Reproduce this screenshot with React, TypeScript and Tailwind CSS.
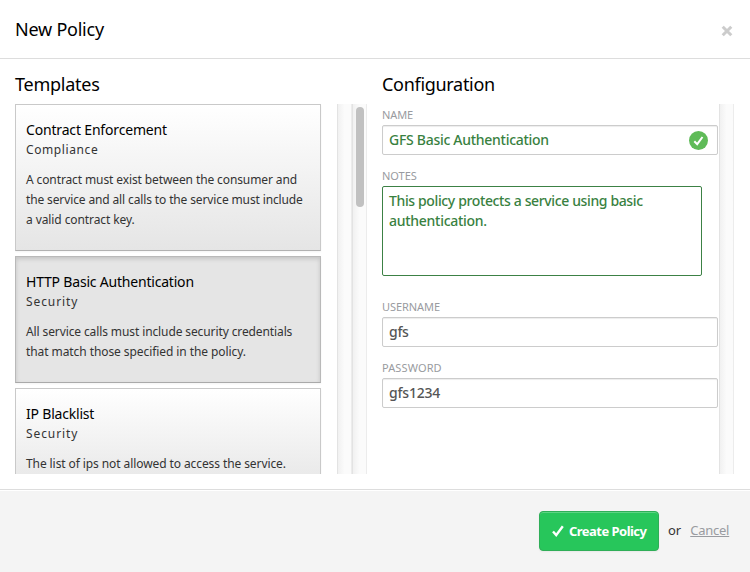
import type { ReactNode } from "react";

type Line = { text: string; tracking: string };

type Template = {
  title: string;
  titleTracking: string;
  kind: string;
  kindTracking: string;
  lines: Line[];
  selected?: boolean;
};

const templates: Template[] = [
  {
    title: "Contract Enforcement",
    titleTracking: "tracking-[-0.17px]",
    kind: "Compliance",
    kindTracking: "tracking-[0.6px]",
    lines: [
      { text: "A contract must exist between the consumer and", tracking: "tracking-[-0.11px]" },
      { text: "the service and all calls to the service must include", tracking: "tracking-[-0.13px]" },
      { text: "a valid contract key.", tracking: "tracking-[-0.09px]" },
    ],
  },
  {
    title: "HTTP Basic Authentication",
    titleTracking: "tracking-[-0.2px]",
    kind: "Security",
    kindTracking: "tracking-[0.9px]",
    selected: true,
    lines: [
      { text: "All service calls must include security credentials", tracking: "tracking-[-0.11px]" },
      { text: "that match those specified in the policy.", tracking: "tracking-[-0.08px]" },
    ],
  },
  {
    title: "IP Blacklist",
    titleTracking: "tracking-[-0.2px]",
    kind: "Security",
    kindTracking: "tracking-[0.9px]",
    lines: [{ text: "The list of ips not allowed to access the service.", tracking: "tracking-[-0.09px]" }],
  },
];

function TemplateCard({ template }: { template: Template }) {
  const surface = template.selected
    ? "bg-[#e5e5e5] border-[#b9b9b9] border-b-[#a9a9a9] shadow-[inset_0_2px_4px_rgba(0,0,0,0.15),0_1px_2px_rgba(0,0,0,0.05)]"
    : "bg-linear-to-b from-white to-[#e5e5e5] border-[#c9c9c9] border-b-[#b1b1b1] shadow-[0_1px_2px_rgba(0,0,0,0.05)]";
  return (
    <article className={`mb-[5px] shrink-0 border px-[10px] pt-[15px] pb-5 whitespace-nowrap ${surface}`}>
      <h3 className={`text-[14px] leading-5 text-black ${template.titleTracking}`}>{template.title}</h3>
      <p className={`text-[12px] leading-5 text-[#333] ${template.kindTracking}`}>{template.kind}</p>
      <div className="mt-[10px] text-[12px] leading-5 text-[#333]">
        {template.lines.map((line) => (
          <p key={line.text} className={line.tracking}>
            {line.text}
          </p>
        ))}
      </div>
    </article>
  );
}

function Track({ thumb = false }: { thumb?: boolean }) {
  return (
    <div className="w-[15px] shrink-0 border-x border-l-[#e3e3e3] border-r-[#ececec] bg-linear-to-r from-[#f1f1f1] via-[#fbfbfb] via-50% to-[#fbfbfb] pt-[3px] pl-[3px]">
      {thumb && <div className="h-[100px] w-2 rounded-full bg-[#c1c1c1]" />}
    </div>
  );
}

function Field({ label, tracking, children }: { label: string; tracking: string; children: ReactNode }) {
  return (
    <div className="flex flex-col items-start">
      <label className={`text-[11px] leading-5 text-[#999ba0] ${tracking}`}>{label}</label>
      {children}
    </div>
  );
}

const inputBox =
  "flex h-[30px] w-[336px] items-center rounded-[2px] border border-[#ccc] px-[6px] text-[14px] font-medium leading-5 whitespace-nowrap shadow-[inset_0_1px_1px_rgba(0,0,0,0.075)]";

export default function App() {
  return (
    <div className="flex h-[572px] w-[750px] flex-col overflow-hidden bg-white font-['Noto_Sans','Open_Sans',sans-serif] text-black">
      <header className="flex h-[59px] shrink-0 items-center justify-between border-b border-[#ddd] pr-[17px] pl-[15px]">
        <h1 className="text-[18px] leading-5 tracking-[-0.23px]">New Policy</h1>
        <button aria-label="Close" className="mt-[3px] text-[#ccc]">
          <svg width="12" height="12" viewBox="0 0 12 12" fill="none" stroke="currentColor" strokeWidth="3">
            <path d="M1.7 1.7l8.6 8.6M10.3 1.7l-8.6 8.6" />
          </svg>
        </button>
      </header>

      <main className="flex h-[430px] shrink-0">
        <section className="ml-[15px] flex w-[337px] flex-col">
          <h2 className="mt-[15px] h-[30px] text-[18px] leading-5 tracking-[-0.25px]">Templates</h2>
          <div className="flex h-[370px] overflow-hidden">
            <div className="flex w-[306px] flex-col">
              {templates.map((template) => (
                <TemplateCard key={template.title} template={template} />
              ))}
            </div>
            <div className="ml-4 flex">
              <Track />
            </div>
          </div>
        </section>

        <section className="flex h-[415px] items-end">
          <div className="flex h-[370px]">
            <Track thumb />
          </div>
        </section>

        <section className="ml-[15px] flex w-[352px] flex-col">
          <h2 className="mt-[15px] h-[30px] text-[18px] leading-5 tracking-[-0.3px]">Configuration</h2>
          <div className="flex h-[370px] justify-between">
            <form className="pt-px">
              <Field label="NAME" tracking="tracking-[-0.1px]">
                <div className={`${inputBox} justify-between pr-[9px] text-[#39813f]`}>
                  <span className="tracking-[-0.28px]">GFS Basic Authentication</span>
                  <svg width="19" height="19" viewBox="0 0 19 19" fill="none">
                    <circle cx="9.5" cy="9.5" r="9.5" fill="#5fbb58" />
                    <path d="M5.3 10.2l2.9 3 5.3-7.2" stroke="#fff" strokeWidth="2" />
                  </svg>
                </div>
              </Field>
              <div className="mt-[11px]">
                <Field label="NOTES" tracking="tracking-[0px]">
                  <div className="h-[90px] w-[320px] rounded-[2px] border border-[#3c8145] px-[6px] pt-1 text-[14px] leading-5 font-medium whitespace-nowrap text-[#39813f]">
                    <p className="tracking-[-0.37px]">This policy protects a service using basic</p>
                    <p className="tracking-[-0.28px]">authentication.</p>
                  </div>
                </Field>
              </div>
              <div className="mt-[21px]">
                <Field label="USERNAME" tracking="tracking-[-0.07px]">
                  <div className={`${inputBox} text-[#555]`}>
                    <span className="tracking-[-0.3px]">gfs</span>
                  </div>
                </Field>
              </div>
              <div className="mt-[11px]">
                <Field label="PASSWORD" tracking="tracking-[0.12px]">
                  <div className={`${inputBox} text-[#555]`}>
                    <span className="tracking-[-0.2px]">gfs1234</span>
                  </div>
                </Field>
              </div>
            </form>
            <Track />
          </div>
        </section>
      </main>

      <footer className="flex h-[83px] shrink-0 items-start border-t border-[#ddd] bg-[#f4f4f4] pt-[21px] pl-[539px] whitespace-nowrap shadow-[inset_0_1px_0_#fff]">
        <button className="flex h-10 w-[120px] shrink-0 items-center rounded-[4px] border border-[#2fae58] bg-[#27c65b] pl-3 text-[13px] font-bold text-white shadow-[inset_0_1px_0_rgba(255,255,255,0.25),0_1px_2px_rgba(0,0,0,0.05)]">
          <svg className="mr-[5px]" width="12" height="12" viewBox="0 0 12 12" fill="none" stroke="currentColor" strokeWidth="2.4">
            <path d="M1 6.5l3.2 3.6L10.8 1.2" />
          </svg>
          <span className="pt-0.5 tracking-[-0.53px]">Create Policy</span>
        </button>
        <span className="mt-[9px] ml-[9px] text-[13px] leading-5 text-[#333]">or</span>
        <a className="mt-[9px] ml-[9px] text-[13px] leading-5 tracking-[-0.25px] text-[#999ba0] underline">Cancel</a>
      </footer>
    </div>
  );
}
